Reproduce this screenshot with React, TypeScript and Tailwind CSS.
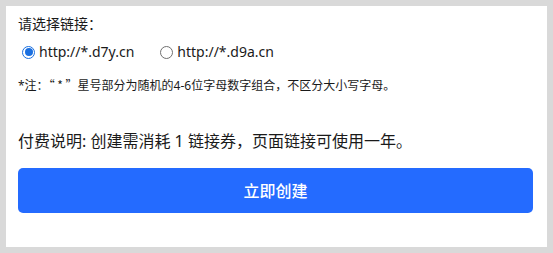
import { useState } from 'react';

const FONT = '"Noto Sans", "Noto Sans CJK SC", sans-serif';
const CJK = '"Noto Sans CJK SC", sans-serif';

const OPTIONS = ['http://*.d7y.cn', 'http://*.d9a.cn'];

function Radio({ checked }: { checked: boolean }) {
  return checked ? (
    <span className="flex h-[13px] w-[13px] shrink-0 items-center justify-center rounded-full border border-[#1a6fe0] bg-white">
      <span className="h-[8px] w-[8px] rounded-full bg-[#1a6fe0]" />
    </span>
  ) : (
    <span className="h-[13px] w-[13px] shrink-0 rounded-full border border-[#707070] bg-white" />
  );
}

export default function App() {
  const [selected, setSelected] = useState(0);

  return (
    <div className="h-[253px] w-[553px] bg-[#d9d9d9] p-[6px]" style={{ fontFamily: FONT }}>
      <div className="flex h-[241px] w-[541px] flex-col bg-white pl-3 pr-[14px] pt-[8px] text-[#1a1a1a]">
        <p className="text-[14px] leading-[20px]">请选择链接：</p>

        {/* Domain options */}
        <div className="mt-[8px] flex items-center gap-[26px] pl-[4px]">
          {OPTIONS.map((opt, i) => (
            <button
              key={opt}
              className="flex items-center gap-[4px] text-[14px] leading-[20px]"
              onClick={() => setSelected(i)}
            >
              <Radio checked={selected === i} />
              <span>{opt}</span>
            </button>
          ))}
        </div>

        <p className="mt-[15px] text-[12px] leading-[16px]">
          *注：<span lang="zh-CN" style={{ fontFamily: CJK }}>“ * ”</span>星号部分为随机的4-6位字母数字组合，不区分大小写字母。
        </p>

        <p className="mt-[35px] text-[16px] leading-[24px]">
          付费说明: 创建需消耗 1 链接券，页面链接可使用一年。
        </p>

        <button className="mt-[15px] h-[45px] w-full rounded-[5px] bg-[#246bff] text-[16px] font-medium text-white">
          立即创建
        </button>
      </div>
    </div>
  );
}
